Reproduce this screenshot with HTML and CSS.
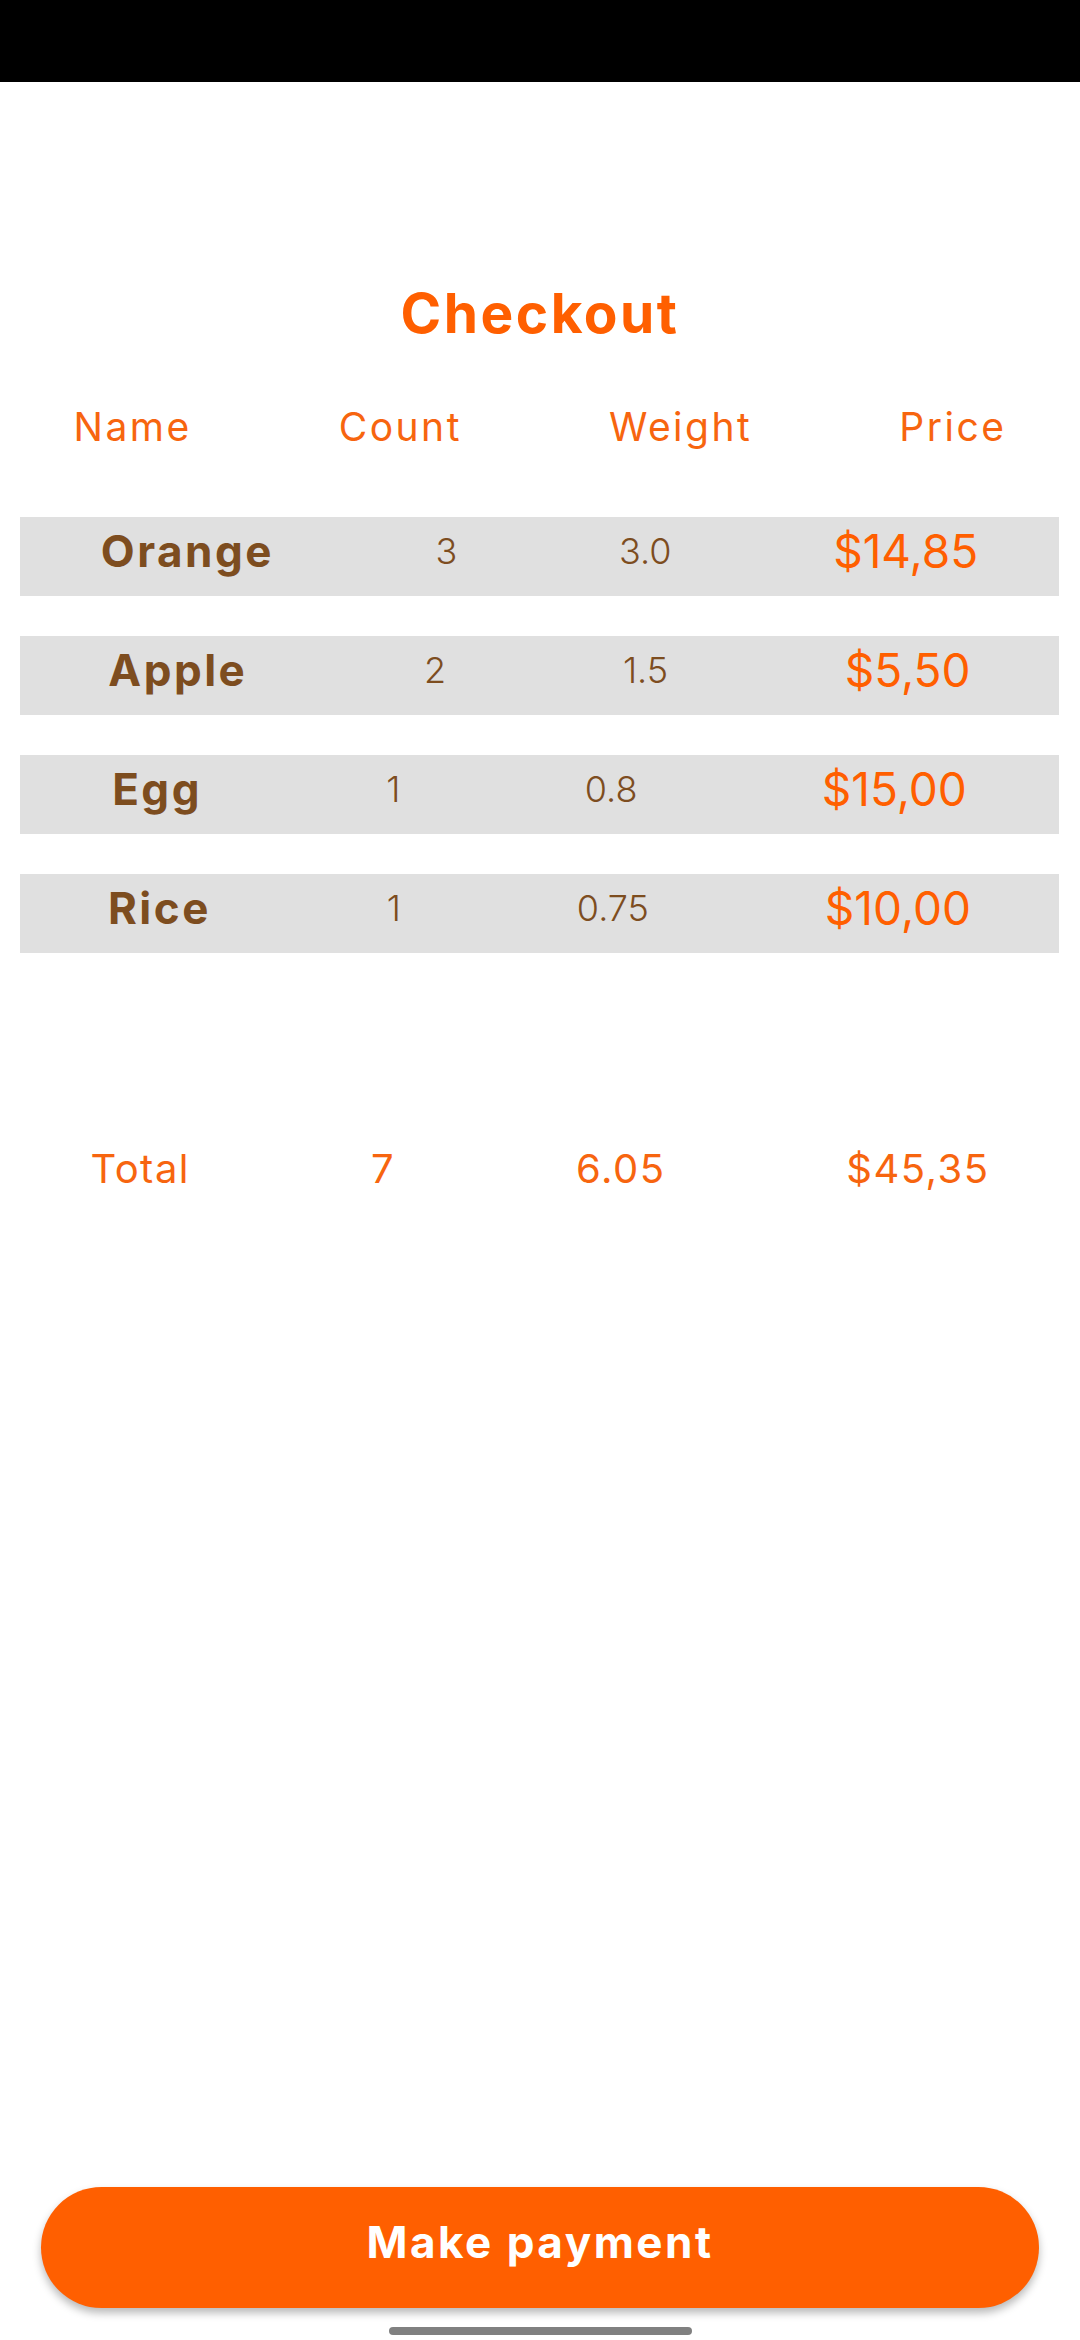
FILE: index.html
```html
<!DOCTYPE html>
<html>
<head>
<meta charset="utf-8">
<link rel="stylesheet" href="styles.css">
</head>
<body>
<div class="statusbar"></div>
<h1 class="title">Checkout</h1>
<div class="head-row">
  <span>Name</span><span>Count</span><span>Weight</span><span>Price</span>
</div>
<div class="items">
  <div class="item">
    <span class="name">Orange</span><span class="num">3</span><span class="num">3.0</span><span class="price">$14,85</span>
  </div>
  <div class="item">
    <span class="name">Apple</span><span class="num">2</span><span class="num">1.5</span><span class="price">$5,50</span>
  </div>
  <div class="item">
    <span class="name">Egg</span><span class="num">1</span><span class="num">0.8</span><span class="price">$15,00</span>
  </div>
  <div class="item">
    <span class="name">Rice</span><span class="num">1</span><span class="num">0.75</span><span class="price">$10,00</span>
  </div>
</div>
<div class="total-row">
  <span>Total</span><span>7</span><span>6.05</span><span>$45,35</span>
</div>
<div class="spacer"></div>
<button class="pay">Make payment</button>
<div class="home-indicator"></div>
</body>
</html>
```

FILE: styles.css
```css
html, body {
  margin: 0;
  padding: 0;
}
body {
  width: 1080px;
  height: 2340px;
  background: #ffffff;
  font-family: "Inter", "Open Sans", sans-serif;
  display: flex;
  flex-direction: column;
  overflow: hidden;
}
.statusbar {
  height: 82px;
  background: #000000;
  flex: none;
}
.title {
  margin: 204px 0 0 0;
  font-size: 55px;
  line-height: 1;
  font-weight: 700;
  color: #ff5f00;
  text-align: center;
  letter-spacing: 2.5px;
}
.head-row {
  margin-top: 66px;
  display: flex;
  justify-content: space-around;
  font-size: 39px;
  line-height: 1;
  font-weight: 400;
  color: #f7650f;
  letter-spacing: 2.5px;
}
.items {
  margin-top: 71px;
  padding: 0 21px 0 20px;
  display: flex;
  flex-direction: column;
  gap: 40px;
}
.item {
  height: 79px;
  box-sizing: border-box;
  padding-bottom: 11px;
  background: #e0e0e0;
  display: flex;
  align-items: center;
  justify-content: space-around;
  line-height: 1;
}
.name {
  font-size: 44px;
  font-weight: 700;
  color: #7d4d1f;
  letter-spacing: 2.5px;
}
.num {
  font-size: 36px;
  font-weight: 300;
  color: #7d4d1f;
}
.price {
  font-size: 46px;
  font-weight: 400;
  color: #ff5f00;
  letter-spacing: 0;
}
.total-row {
  margin-top: 196px;
  display: flex;
  justify-content: space-around;
  font-size: 40px;
  line-height: 1;
  font-weight: 400;
  color: #f7650f;
  letter-spacing: 1.5px;
}
.spacer {
  flex: 1;
}
.pay {
  flex: none;
  margin: 0 41px 0 41px;
  height: 121px;
  border: none;
  border-radius: 61px;
  background: #ff5f00;
  color: #ffffff;
  font-family: "Inter", "Open Sans", sans-serif;
  font-size: 44px;
  font-weight: 700;
  letter-spacing: 2.5px;
  box-shadow: 0 5px 8px rgba(0, 0, 0, 0.28);
  padding: 0 0 12px 0;
}
.home-indicator {
  flex: none;
  align-self: center;
  width: 303px;
  height: 8px;
  border-radius: 4px;
  background: #808080;
  margin: 19px 0 5px 0;
}
```
